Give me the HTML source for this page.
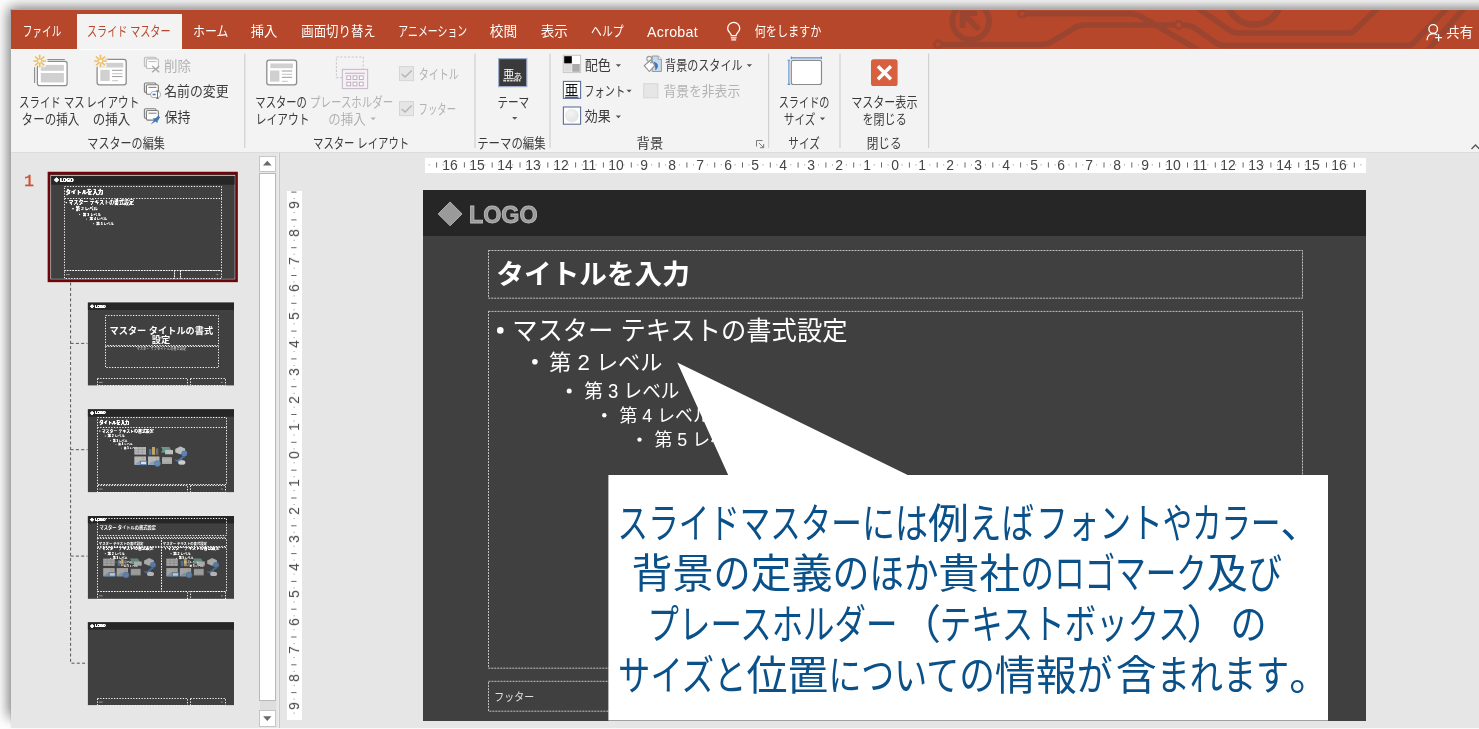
<!DOCTYPE html>
<html lang="ja"><head><meta charset="utf-8"><title>PowerPoint スライド マスター</title>
<style>
html,body{margin:0;padding:0;background:#fff}
body{width:1479px;height:729px;overflow:hidden;position:relative;font-family:"Liberation Sans",sans-serif}
#shadow{position:absolute;left:11px;top:10px;width:1480px;height:704px;box-shadow:0 0 13px 3.5px rgba(0,0,0,.56)}
#win{position:absolute;left:11px;top:9px;width:1470px;height:717.6px;background:#e6e6e6;border-top:1px solid #a9b1b3;overflow:hidden}
#lb{position:absolute;left:10px;top:9px;width:1px;height:716px;background:linear-gradient(#a9b1b3 0,#a6a9aa 8%,#a6a9aa 96%,rgba(166,169,170,0) 100%)}
#win>div,#win>span{position:absolute}
#tabs{left:0;top:0;width:1468px;height:38.5px;background:#B7472A}
#tabon{left:66px;top:4px;width:105px;height:35px;background:#f3f3f3}
#ribbon{left:0;top:38.5px;width:1468px;height:104px;background:#f3f3f3;border-top:1px solid #fbfdfd;border-bottom:1px solid #dcdcdc;box-sizing:border-box}
.lat{white-space:nowrap;line-height:1;will-change:transform}
.rn,.rv{font-size:13.9px;color:#454545}
.rn{transform:translateX(-50%)}
.rv{transform:translate(-50%,-50%) rotate(-90deg)}
#ov{position:absolute;left:0;top:0}
#tl{position:absolute;left:0;top:0;width:1479px;height:729px;overflow:hidden;color:transparent}
#tl span{position:absolute;white-space:nowrap;overflow:hidden;line-height:1.2;height:1.2em}
.t{font-family:"Liberation Sans","Noto Sans CJK JP",sans-serif}
</style></head>
<body>
<div id="shadow"></div><div id="lb"></div>
<div id="win">
<div id="tabs"></div><div id="tabon"></div>
<span class="lat" style="left:636.2px;top:15.2px;font-size:14.2px;letter-spacing:.3px;color:#fff">Acrobat</span>
<div id="ribbon"></div>
<div id="sbup" style="left:248.2px;top:145.6px;width:15.3px;height:14.8px;background:#fff;border:1px solid #c6c6c6;box-sizing:content-box"></div>
<div id="sbthumb" style="left:248.2px;top:162.8px;width:15.3px;height:526.6px;background:#fff;border:1px solid #b9b9b9"></div>
<div id="sbtrack" style="left:248.7px;top:691.4px;width:16.3px;height:9px;background:#dedede"></div>
<div id="sbdn" style="left:248.2px;top:700.2px;width:15.3px;height:15.2px;background:#fff;border:1px solid #c6c6c6"></div>
<div id="split" style="left:267.2px;top:142.6px;width:1px;height:575px;background:#c8c8c8;border-left:1px solid #eee"></div>
<div id="hruler" style="left:413.9px;top:147.9px;width:940.8px;height:15.2px;background:#fff"></div>
<div id="vruler" style="left:275.6px;top:180.6px;width:15.5px;height:529.4px;background:#fff"></div>
<span class="lat rn" style="left:438.5px;top:148.6px">16</span>
<span class="lat rn" style="left:466.3px;top:148.6px">15</span>
<span class="lat rn" style="left:494.1px;top:148.6px">14</span>
<span class="lat rn" style="left:521.9px;top:148.6px">13</span>
<span class="lat rn" style="left:549.7px;top:148.6px">12</span>
<span class="lat rn" style="left:577.5px;top:148.6px">11</span>
<span class="lat rn" style="left:605.4px;top:148.6px">10</span>
<span class="lat rn" style="left:633.2px;top:148.6px">9</span>
<span class="lat rn" style="left:661.0px;top:148.6px">8</span>
<span class="lat rn" style="left:688.8px;top:148.6px">7</span>
<span class="lat rn" style="left:716.6px;top:148.6px">6</span>
<span class="lat rn" style="left:744.4px;top:148.6px">5</span>
<span class="lat rn" style="left:772.2px;top:148.6px">4</span>
<span class="lat rn" style="left:800.0px;top:148.6px">3</span>
<span class="lat rn" style="left:827.8px;top:148.6px">2</span>
<span class="lat rn" style="left:855.6px;top:148.6px">1</span>
<span class="lat rn" style="left:883.5px;top:148.6px">0</span>
<span class="lat rn" style="left:911.3px;top:148.6px">1</span>
<span class="lat rn" style="left:939.1px;top:148.6px">2</span>
<span class="lat rn" style="left:966.9px;top:148.6px">3</span>
<span class="lat rn" style="left:994.7px;top:148.6px">4</span>
<span class="lat rn" style="left:1022.5px;top:148.6px">5</span>
<span class="lat rn" style="left:1050.3px;top:148.6px">6</span>
<span class="lat rn" style="left:1078.1px;top:148.6px">7</span>
<span class="lat rn" style="left:1105.9px;top:148.6px">8</span>
<span class="lat rn" style="left:1133.7px;top:148.6px">9</span>
<span class="lat rn" style="left:1161.5px;top:148.6px">10</span>
<span class="lat rn" style="left:1189.4px;top:148.6px">11</span>
<span class="lat rn" style="left:1217.2px;top:148.6px">12</span>
<span class="lat rn" style="left:1245.0px;top:148.6px">13</span>
<span class="lat rn" style="left:1272.8px;top:148.6px">14</span>
<span class="lat rn" style="left:1300.6px;top:148.6px">15</span>
<span class="lat rn" style="left:1328.4px;top:148.6px">16</span>
<span class="lat rv" style="left:283.5px;top:195.0px">9</span>
<span class="lat rv" style="left:283.5px;top:222.8px">8</span>
<span class="lat rv" style="left:283.5px;top:250.6px">7</span>
<span class="lat rv" style="left:283.5px;top:278.4px">6</span>
<span class="lat rv" style="left:283.5px;top:306.2px">5</span>
<span class="lat rv" style="left:283.5px;top:334.0px">4</span>
<span class="lat rv" style="left:283.5px;top:361.8px">3</span>
<span class="lat rv" style="left:283.5px;top:389.6px">2</span>
<span class="lat rv" style="left:283.5px;top:417.4px">1</span>
<span class="lat rv" style="left:283.5px;top:445.2px">0</span>
<span class="lat rv" style="left:283.5px;top:473.1px">1</span>
<span class="lat rv" style="left:283.5px;top:500.9px">2</span>
<span class="lat rv" style="left:283.5px;top:528.7px">3</span>
<span class="lat rv" style="left:283.5px;top:556.5px">4</span>
<span class="lat rv" style="left:283.5px;top:584.3px">5</span>
<span class="lat rv" style="left:283.5px;top:612.1px">6</span>
<span class="lat rv" style="left:283.5px;top:639.9px">7</span>
<span class="lat rv" style="left:283.5px;top:667.7px">8</span>
<span class="lat rv" style="left:283.5px;top:695.5px">9</span>
<div id="slide" style="left:412.3px;top:179.8px;width:942.4px;height:530.9px;background:#404040"><div id="band" style="height:46.6px;background:#262626"></div></div>
<span class="lat" style="left:12.6px;top:163.8px;font-family:'Liberation Mono',monospace;font-size:16.6px;-webkit-text-stroke:.35px #cf4f30;color:#cf4f30">1</span>
</div>
<div id="tl"><span style="left:23.3px;top:23.4px;font-size:13.33px;width:41.5px">ファイル</span><span style="left:87.6px;top:23.4px;font-size:13.33px;width:85.8px">スライド マスター</span><span style="left:193.7px;top:23.4px;font-size:13.33px;width:37.1px">ホーム</span><span style="left:251.0px;top:23.4px;font-size:13.33px;width:30.0px">挿入</span><span style="left:301.7px;top:23.4px;font-size:13.33px;width:76.6px">画面切り替え</span><span style="left:398.7px;top:23.4px;font-size:13.33px;width:70.9px">アニメーション</span><span style="left:490.0px;top:23.4px;font-size:13.33px;width:30.3px">校閲</span><span style="left:541.0px;top:23.4px;font-size:13.33px;width:30.4px">表示</span><span style="left:591.4px;top:23.4px;font-size:13.33px;width:35.9px">ヘルプ</span><span style="left:755.0px;top:23.4px;font-size:13.33px;width:69.6px">何をしますか</span><span style="left:1446.7px;top:24.4px;font-size:13.33px;width:29.8px">共有</span><span style="left:19.7px;top:94.3px;font-size:13.33px;width:67.3px">スライド マス</span><span style="left:22.0px;top:110.8px;font-size:13.33px;width:61.0px">ターの挿入</span><span style="left:87.5px;top:94.3px;font-size:13.33px;width:52.5px">レイアウト</span><span style="left:93.5px;top:110.8px;font-size:13.33px;width:40.5px">の挿入</span><span style="left:164.7px;top:57.5px;font-size:13.33px;width:30.0px">削除</span><span style="left:164.7px;top:83.1px;font-size:13.33px;width:67.5px">名前の変更</span><span style="left:164.7px;top:108.8px;font-size:13.33px;width:29.5px">保持</span><span style="left:88.0px;top:135.2px;font-size:13.33px;width:80.6px">マスターの編集</span><span style="left:256.0px;top:94.3px;font-size:13.33px;width:54.0px">マスターの</span><span style="left:257.0px;top:110.8px;font-size:13.33px;width:53.0px">レイアウト</span><span style="left:311.0px;top:94.3px;font-size:13.33px;width:85.0px">プレースホルダー</span><span style="left:329.0px;top:110.8px;font-size:13.33px;width:40.5px">の挿入</span><span style="left:419.1px;top:65.7px;font-size:13.33px;width:43.2px">タイトル</span><span style="left:419.1px;top:100.8px;font-size:13.33px;width:39.8px">フッター</span><span style="left:313.7px;top:135.2px;font-size:13.33px;width:96.3px">マスター レイアウト</span><span style="left:497.9px;top:94.3px;font-size:13.33px;width:33.8px">テーマ</span><span style="left:477.7px;top:135.2px;font-size:13.33px;width:71.8px">テーマの編集</span><span style="left:585.0px;top:57.2px;font-size:13.33px;width:29.5px">配色</span><span style="left:585.0px;top:82.9px;font-size:13.33px;width:41.0px">フォント</span><span style="left:585.0px;top:108.4px;font-size:13.33px;width:29.5px">効果</span><span style="left:665.5px;top:57.2px;font-size:13.33px;width:80.5px">背景のスタイル</span><span style="left:663.8px;top:82.9px;font-size:13.33px;width:80.0px">背景を非表示</span><span style="left:637.0px;top:135.2px;font-size:13.33px;width:30.0px">背景</span><span style="left:779.3px;top:94.3px;font-size:13.33px;width:53.4px">スライドの</span><span style="left:784.3px;top:110.8px;font-size:13.33px;width:34.7px">サイズ</span><span style="left:788.8px;top:135.2px;font-size:13.33px;width:34.7px">サイズ</span><span style="left:851.8px;top:94.3px;font-size:13.33px;width:69.2px">マスター表示</span><span style="left:863.3px;top:110.8px;font-size:13.33px;width:45.9px">を閉じる</span><span style="left:867.6px;top:135.2px;font-size:13.33px;width:36.4px">閉じる</span><span style="left:498.3px;top:257.5px;font-size:27.50px;width:193.3px">タイトルを入力</span><span style="left:513.8px;top:314.1px;font-size:26.50px;width:337.2px">マスター テキストの書式設定</span><span style="left:549.7px;top:348.5px;font-size:21.60px">第 2 レベル</span><span style="left:584.9px;top:379.0px;font-size:19.60px">第 3 レベル</span><span style="left:620.0px;top:404.6px;font-size:17.70px">第 4 レベル</span><span style="left:655.0px;top:428.4px;font-size:17.70px">第 5 レベル</span><span style="left:495.0px;top:689.7px;font-size:11.50px;width:42.0px">フッター</span><span style="left:619.5px;top:497.9px;font-size:41.00px;width:244.5px">スライドマスター</span><span style="left:865.3px;top:497.9px;font-size:41.00px;width:172.2px">には例えば</span><span style="left:1038.2px;top:497.9px;font-size:41.00px;width:122.2px">フォント</span><span style="left:1164.2px;top:497.9px;font-size:41.00px;width:133.3px">やカラー、</span><span style="left:632.6px;top:547.4px;font-size:41.00px;width:238.5px">背景の定義の</span><span style="left:872.9px;top:547.4px;font-size:41.00px;width:183.7px">ほか貴社の</span><span style="left:1057.6px;top:547.4px;font-size:41.00px;width:150.4px">ロゴマーク</span><span style="left:1207.7px;top:547.4px;font-size:41.00px;width:77.8px">及び</span><span style="left:650.3px;top:599.0px;font-size:41.00px;width:247.7px">プレースホルダー</span><span style="left:925.0px;top:599.0px;font-size:41.00px;width:15.5px">（</span><span style="left:941.3px;top:599.0px;font-size:41.00px;width:250.4px">テキストボックス</span><span style="left:1190.2px;top:599.0px;font-size:41.00px;width:16.5px">）</span><span style="left:1232.7px;top:599.0px;font-size:41.00px;width:35.3px">の</span><span style="left:619.5px;top:649.6px;font-size:41.00px;width:125.8px">サイズと</span><span style="left:747.2px;top:649.6px;font-size:41.00px;width:212.3px">位置について</span><span style="left:961.4px;top:649.6px;font-size:41.00px;width:154.3px">の情報が</span><span style="left:1116.4px;top:649.6px;font-size:41.00px;width:175.8px">含まれます</span><span style="left:1292.0px;top:649.6px;font-size:41.00px;width:16.6px">。</span><span style="left:110.0px;top:324.9px;font-size:9.10px;width:107.0px">マスター タイトルの書式</span><span style="left:152.0px;top:333.9px;font-size:9.10px;width:22.0px">設定</span><span style="left:136.8px;top:346.6px;font-size:3.30px;width:53.4px">マスター サブタイトルの書式設定</span><span style="left:99.8px;top:525.2px;font-size:4.30px;width:60.2px">マスター タイトルの書式設定</span><span style="left:99.0px;top:541.6px;font-size:3.40px;width:48.4px">マスター テキストの書式設定</span><span style="left:163.0px;top:541.6px;font-size:3.40px;width:47.8px">マスター テキストの書式設定</span></div>
<svg id="ov" width="1479" height="729" viewBox="0 0 1479 729">
<text class="t" x="22.69" y="36.47" font-size="13.33" fill="#fff" textLength="38.6" lengthAdjust="spacingAndGlyphs">ファイル</text>
<text class="t" x="86.99" y="36.47" font-size="13.33" fill="#B7472A" textLength="83.5" lengthAdjust="spacingAndGlyphs">スライド マスター</text>
<text class="t" x="193.10" y="36.47" font-size="13.33" fill="#fff" textLength="35.3" lengthAdjust="spacingAndGlyphs">ホーム</text>
<text class="t" x="250.76" y="36.47" font-size="13.33" fill="#fff" textLength="26.6" lengthAdjust="spacingAndGlyphs">挿入</text>
<text class="t" x="301.32" y="36.47" font-size="13.33" fill="#fff" textLength="74.4" lengthAdjust="spacingAndGlyphs">画面切り替え</text>
<text class="t" x="398.36" y="36.47" font-size="13.33" fill="#fff" textLength="68.9" lengthAdjust="spacingAndGlyphs">アニメーション</text>
<text class="t" x="489.78" y="36.47" font-size="13.33" fill="#fff" textLength="27.4" lengthAdjust="spacingAndGlyphs">校閲</text>
<text class="t" x="540.70" y="36.47" font-size="13.33" fill="#fff" textLength="27.2" lengthAdjust="spacingAndGlyphs">表示</text>
<text class="t" x="591.07" y="36.47" font-size="13.33" fill="#fff" textLength="32.5" lengthAdjust="spacingAndGlyphs">ヘルプ</text>
<text class="t" x="754.73" y="36.47" font-size="13.33" fill="#fff" textLength="66.6" lengthAdjust="spacingAndGlyphs">何をしますか</text>
<text class="t" x="1446.37" y="37.47" font-size="13.33" fill="#fff" textLength="26.6" lengthAdjust="spacingAndGlyphs">共有</text>
<text class="t" x="19.07" y="107.37" font-size="13.33" fill="#3a3a3a" textLength="65.5" lengthAdjust="spacingAndGlyphs">スライド マス</text>
<text class="t" x="21.61" y="123.87" font-size="13.33" fill="#3a3a3a" textLength="57.7" lengthAdjust="spacingAndGlyphs">ターの挿入</text>
<text class="t" x="86.26" y="107.37" font-size="13.33" fill="#3a3a3a" textLength="53.0" lengthAdjust="spacingAndGlyphs">レイアウト</text>
<text class="t" x="92.82" y="123.87" font-size="13.33" fill="#3a3a3a" textLength="37.5" lengthAdjust="spacingAndGlyphs">の挿入</text>
<text class="t" x="164.00" y="70.57" font-size="13.33" fill="#b2b2b2" textLength="27.0" lengthAdjust="spacingAndGlyphs">削除</text>
<text class="t" x="164.19" y="96.17" font-size="13.33" fill="#3a3a3a" textLength="64.4" lengthAdjust="spacingAndGlyphs">名前の変更</text>
<text class="t" x="164.50" y="121.87" font-size="13.33" fill="#3a3a3a" textLength="26.0" lengthAdjust="spacingAndGlyphs">保持</text>
<text class="t" x="87.33" y="148.27" font-size="13.33" fill="#3a3a3a" textLength="77.5" lengthAdjust="spacingAndGlyphs">マスターの編集</text>
<text class="t" x="255.33" y="107.37" font-size="13.33" fill="#3a3a3a" textLength="51.5" lengthAdjust="spacingAndGlyphs">マスターの</text>
<text class="t" x="255.75" y="123.87" font-size="13.33" fill="#3a3a3a" textLength="53.6" lengthAdjust="spacingAndGlyphs">レイアウト</text>
<text class="t" x="310.08" y="107.37" font-size="13.33" fill="#b2b2b2" textLength="83.1" lengthAdjust="spacingAndGlyphs">プレースホルダー</text>
<text class="t" x="328.32" y="123.87" font-size="13.33" fill="#b2b2b2" textLength="37.5" lengthAdjust="spacingAndGlyphs">の挿入</text>
<path d="M370.6 117.4h5.2l-2.6 2.8z" fill="#b2b2b2"/>
<text class="t" x="418.71" y="78.77" font-size="13.33" fill="#b2b2b2" textLength="40.2" lengthAdjust="spacingAndGlyphs">タイトル</text>
<text class="t" x="418.51" y="113.87" font-size="13.33" fill="#b2b2b2" textLength="37.5" lengthAdjust="spacingAndGlyphs">フッター</text>
<text class="t" x="313.02" y="148.27" font-size="13.33" fill="#3a3a3a" textLength="96.2" lengthAdjust="spacingAndGlyphs">マスター レイアウト</text>
<text class="t" x="497.40" y="107.37" font-size="13.33" fill="#3a3a3a" textLength="31.8" lengthAdjust="spacingAndGlyphs">テーマ</text>
<path d="M512.1 117.0h5.2l-2.6 2.8z" fill="#555"/>
<text class="t" x="477.20" y="148.27" font-size="13.33" fill="#3a3a3a" textLength="68.5" lengthAdjust="spacingAndGlyphs">テーマの編集</text>
<text class="t" x="584.64" y="70.27" font-size="13.33" fill="#3a3a3a" textLength="26.2" lengthAdjust="spacingAndGlyphs">配色</text>
<path d="M615.8 64.2h5.2l-2.6 2.8z" fill="#555"/>
<text class="t" x="584.37" y="95.97" font-size="13.33" fill="#3a3a3a" textLength="40.8" lengthAdjust="spacingAndGlyphs">フォント</text>
<path d="M626.5 89.8h5.2l-2.6 2.8z" fill="#555"/>
<text class="t" x="584.71" y="121.47" font-size="13.33" fill="#3a3a3a" textLength="26.0" lengthAdjust="spacingAndGlyphs">効果</text>
<path d="M615.8 115.4h5.2l-2.6 2.8z" fill="#555"/>
<text class="t" x="665.12" y="70.27" font-size="13.33" fill="#3a3a3a" textLength="77.4" lengthAdjust="spacingAndGlyphs">背景のスタイル</text>
<path d="M746.8 64.2h5.2l-2.6 2.8z" fill="#555"/>
<text class="t" x="663.42" y="95.97" font-size="13.33" fill="#b2b2b2" textLength="76.8" lengthAdjust="spacingAndGlyphs">背景を非表示</text>
<text class="t" x="636.62" y="148.27" font-size="13.33" fill="#3a3a3a" textLength="26.6" lengthAdjust="spacingAndGlyphs">背景</text>
<text class="t" x="778.68" y="107.37" font-size="13.33" fill="#3a3a3a" textLength="50.8" lengthAdjust="spacingAndGlyphs">スライドの</text>
<text class="t" x="783.84" y="123.87" font-size="13.33" fill="#3a3a3a" textLength="31.6" lengthAdjust="spacingAndGlyphs">サイズ</text>
<path d="M819.9 117.4h5.2l-2.6 2.8z" fill="#555"/>
<text class="t" x="788.34" y="148.27" font-size="13.33" fill="#3a3a3a" textLength="31.6" lengthAdjust="spacingAndGlyphs">サイズ</text>
<text class="t" x="851.14" y="107.37" font-size="13.33" fill="#3a3a3a" textLength="66.3" lengthAdjust="spacingAndGlyphs">マスター表示</text>
<text class="t" x="862.46" y="123.87" font-size="13.33" fill="#3a3a3a" textLength="44.3" lengthAdjust="spacingAndGlyphs">を閉じる</text>
<text class="t" x="866.68" y="148.27" font-size="13.33" fill="#3a3a3a" textLength="34.9" lengthAdjust="spacingAndGlyphs">閉じる</text>
<path d="M244.8 53.5V148" stroke="#d0d0d0" stroke-width="1.2"/>
<path d="M475.0 53.5V148" stroke="#d0d0d0" stroke-width="1.2"/>
<path d="M550.0 53.5V148" stroke="#d0d0d0" stroke-width="1.2"/>
<path d="M768.6 53.5V148" stroke="#d0d0d0" stroke-width="1.2"/>
<path d="M840.0 53.5V148" stroke="#d0d0d0" stroke-width="1.2"/>
<path d="M928.6 53.5V148" stroke="#d0d0d0" stroke-width="1.2"/>
<clipPath id="cpt"><rect x="11" y="10" width="1468" height="38.5"/></clipPath>
<g clip-path="url(#cpt)" fill="none" stroke="#9b4530" stroke-width="5.700" stroke-linejoin="round"><circle cx="970.7" cy="21.2" r="18.4" stroke-width="5.8"/><path d="M962.6 28V13.2H977M963.5 14l15.5 15.5" stroke-width="5.6" stroke-linejoin="miter"/><circle cx="1022" cy="13.7" r="3.6" stroke-width="2.6"/><path d="M1026 13.7H1128q8 0 15 4L1200 51"/><circle cx="938" cy="44.5" r="3.6" stroke-width="2.6"/><path d="M942 44.5H1042q6 0 10-3L1076 27q4-2 9-2H1174"/><circle cx="1178.6" cy="25" r="3.8" stroke-width="2.6"/><path d="M1183 25q8 0 13 4L1216 43q4 2.5 9 2.5H1408q4 0 6-3L1449 6"/><path d="M1192 4L1229 30q4 3 9 3H1349q4 0 6-3L1380 6"/><circle cx="1254" cy="-3" r="27.500" stroke-width="6.400"/><path d="M1466 6L1426 52"/></g>
<g fill="none" stroke="#fff" stroke-width="1.3" stroke-linecap="round"><path d="M731.3 35.6c0-2.6-3.6-3.600-3.600-7.200a6 6 0 0 1 12 0c0 3.600-3.600 4.600-3.600 7.200z"/><path d="M731.3 37.8h4.8M731.8 39.9h3.8"/></g>
<g fill="none" stroke="#fff" stroke-width="1.3"><circle cx="1433.2" cy="29" r="4.3"/><path d="M1427 40.3c0-4 2.6-6.800 6.200-6.800 1.600 0 3 .5 4 1.400"/><path d="M1438.6 34.2v7M1435.1 37.7h7"/></g>
<path d="M47.3 59.5H64.8M34.6 67V83" stroke="#8c8c8c" stroke-width="1.1" fill="none"/><rect x="37.4" y="61.3" width="29.7" height="24.3" rx="2.2" fill="#fff" stroke="#8c8c8c" stroke-width="1.2"/><rect x="40.8" y="64.9" width="23.1" height="5.9" fill="#d0d0d0"/><rect x="40.8" y="73" width="23.1" height="9.4" fill="#d0d0d0"/><path d="M33.4 61.0L46.0 61.0M35.2 56.5L44.2 65.5M39.7 54.7L39.7 67.3M44.2 56.5L35.2 65.5" stroke="#f5f3ee" stroke-width="3.6" stroke-linecap="round" fill="none"/><path d="M33.4 61.0L46.0 61.0M35.2 56.5L44.2 65.5M39.7 54.7L39.7 67.3M44.2 56.5L35.2 65.5" stroke="#e9bf6c" stroke-width="1.7" fill="none"/><circle cx="39.7" cy="61.0" r="1.6" fill="#fdf8ec"/>
<rect x="97.1" y="59.4" width="29.1" height="25.4" rx="2.4" fill="#fff" stroke="#8c8c8c" stroke-width="1.3"/><rect x="100.7" y="62.8" width="22.6" height="4.7" fill="#d0d0d0"/><rect x="100.3" y="69.8" width="9.4" height="11.2" fill="#d0d0d0"/><path d="M112.1 70.3h10.4M112.1 76.6h10.4" stroke="#9a9a9a" stroke-width="1"/><path d="M112.1 73.6h10.4M112.1 80.6h6" stroke="#cfcfcf" stroke-width="1.3"/><path d="M94.2 61.0L106.8 61.0M96.0 56.5L105.0 65.5M100.5 54.7L100.5 67.3M105.0 56.5L96.0 65.5" stroke="#f5f3ee" stroke-width="3.6" stroke-linecap="round" fill="none"/><path d="M94.2 61.0L106.8 61.0M96.0 56.5L105.0 65.5M100.5 54.7L100.5 67.3M105.0 56.5L96.0 65.5" stroke="#e9bf6c" stroke-width="1.7" fill="none"/><circle cx="100.5" cy="61.0" r="1.6" fill="#fdf8ec"/>
<rect x="266.8" y="60.1" width="29.8" height="24.8" rx="2.4" fill="#fff" stroke="#8c8c8c" stroke-width="1.3"/><rect x="270.4" y="63.5" width="22.6" height="4.7" fill="#d0d0d0"/><rect x="270.0" y="70.5" width="9.4" height="11.2" fill="#d0d0d0"/><path d="M281.8 71.0h10.4M281.8 77.3h10.4" stroke="#9a9a9a" stroke-width="1"/><path d="M281.8 74.3h10.4M281.8 81.3h6" stroke="#cfcfcf" stroke-width="1.3"/>
<rect x="144.4" y="57.2" width="11.6" height="9.4" rx="1.3" fill="#f3f3f3" stroke="#bdbdbd" stroke-width="1.1"/><rect x="146.4" y="58.9" width="12" height="9.6" rx="1.3" fill="#fcfcfc" stroke="#bdbdbd" stroke-width="1.1"/><path d="M148.5 61.6h8" stroke="#bdbdbd" stroke-width="1"/><path d="M152.2 66l7 6.2M159.2 66l-7 6.2" stroke="#a9a9a9" stroke-width="1.5"/>
<rect x="144.4" y="83.0" width="11.6" height="9.4" rx="1.3" fill="#f3f3f3" stroke="#7d7d7d" stroke-width="1.1"/><rect x="146.4" y="84.7" width="12" height="9.6" rx="1.3" fill="#fcfcfc" stroke="#7d7d7d" stroke-width="1.1"/><path d="M148.5 87.4h8" stroke="#7d7d7d" stroke-width="1"/><rect x="150.700" y="91.500" width="9.800" height="6" rx="2.600" fill="#fff" stroke="#9c9c9c" stroke-width=".8"/><path d="M152.600 94.500h3" stroke="#3f78b5" stroke-width="1.600"/><path d="M157.500 90.800v7.600M156.200 90.800h2.600M156.200 98.400h2.600" stroke="#666" stroke-width=".9" fill="none"/>
<rect x="144.4" y="108.8" width="11.6" height="9.4" rx="1.3" fill="#f3f3f3" stroke="#7d7d7d" stroke-width="1.1"/><rect x="146.4" y="110.5" width="12" height="9.6" rx="1.3" fill="#fcfcfc" stroke="#7d7d7d" stroke-width="1.1"/><path d="M148.5 113.2h8" stroke="#7d7d7d" stroke-width="1"/><path d="M150.6 124.4l3.6-4.200-1.600-1.600 3.400-.6 2.200-2.600 2 2-2.400 2.400-.4 3.400-1.800-1.600z" fill="#3f78b5"/>
<rect x="336.4" y="57" width="26.8" height="20.6" fill="none" stroke="#c9c9c9" stroke-width="1.1" stroke-dasharray="2.2 1.6"/><rect x="342.4" y="69.4" width="25.2" height="19.2" fill="#f6eff6" stroke="#c9bcc9" stroke-width="1.1"/><path d="M345 73.3h20" stroke="#c9bcc9" stroke-width="1.2"/><rect x="346.8" y="75.9" width="3.8" height="3.6" fill="#fff" stroke="#bdb0bd" stroke-width="1"/><rect x="346.8" y="82.2" width="3.8" height="3.6" fill="#fff" stroke="#bdb0bd" stroke-width="1"/><rect x="353.1" y="75.9" width="3.8" height="3.6" fill="#fff" stroke="#bdb0bd" stroke-width="1"/><rect x="353.1" y="82.2" width="3.8" height="3.6" fill="#fff" stroke="#bdb0bd" stroke-width="1"/><rect x="359.4" y="75.9" width="3.8" height="3.6" fill="#fff" stroke="#bdb0bd" stroke-width="1"/><rect x="359.4" y="82.2" width="3.8" height="3.6" fill="#fff" stroke="#bdb0bd" stroke-width="1"/>
<rect x="399.5" y="66.6" width="14" height="14" fill="#e6e6e6" stroke="#d5d5d5" stroke-width="1"/><path d="M401.7 74.0l3.4 3 6.6-6.600" fill="none" stroke="#b4b4b4" stroke-width="1.4"/><rect x="399.5" y="101.6" width="14" height="14" fill="#e6e6e6" stroke="#d5d5d5" stroke-width="1"/><path d="M401.7 109.0l3.4 3 6.6-6.600" fill="none" stroke="#b4b4b4" stroke-width="1.4"/><rect x="643.8" y="83.8" width="14" height="14" fill="#e6e6e6" stroke="#d5d5d5" stroke-width="1"/>
<rect x="498.6" y="58.6" width="28.2" height="28" fill="#3a3a3a" stroke="#9eabc6" stroke-width="1.2"/><path d="M503.2 80.6h3M507 80.6h2.4M510.2 80.6h2.4M513.4 80.6h2M516.2 80.6h1.8M518.8 80.6h1.6" stroke="#d8d8d8" stroke-width="1.6"/>
<text class="t" x="503.13" y="77.77" font-size="11.5" fill="#fff" textLength="11" lengthAdjust="spacingAndGlyphs">亜</text>
<text class="t" x="513.60" y="78.84" font-size="8" fill="#fff" textLength="8.8" lengthAdjust="spacingAndGlyphs">あ</text>
<rect x="563.3" y="55.3" width="17.3" height="17.3" fill="#fff" stroke="#c6c6c6" stroke-width="1"/><rect x="564.2" y="56.2" width="7.6" height="7.2" fill="#000"/><rect x="564.2" y="64" width="7.6" height="7.8" fill="#dcdcdc"/><rect x="572.2" y="64" width="7.6" height="7.8" fill="#ababab"/>
<rect x="563.4" y="81.4" width="17.2" height="17" fill="#fff" stroke="#5c6f96" stroke-width="1.1"/><path d="M565 97.2h13.4" stroke="#222" stroke-width="1"/>
<text class="t" x="564.86" y="94.97" font-size="13.6" fill="#111">亜</text>
<defs><radialGradient id="eg" cx=".4" cy=".35" r=".7"><stop offset="0" stop-color="#f4f4f4"/><stop offset="1" stop-color="#e2e2e2"/></radialGradient></defs><rect x="563.4" y="107" width="17.2" height="17.2" fill="#fff" stroke="#5c6f96" stroke-width="1.1"/><circle cx="571.9" cy="115.6" r="6.4" fill="url(#eg)" stroke="#e0e0e0" stroke-width=".6"/>
<path d="M652.2 56h6.2l3 3.2v12.3h-9.200z" fill="#c7daee" stroke="#9a9a9a" stroke-width="1"/><path d="M658.2 56v3.4h3.2" fill="#fff" stroke="#9a9a9a" stroke-width=".9"/><path d="M653.4 61.4c3 .8 4.6 2.4 4.6 4.6 0 1.8-1.400 3.200-2.600 4.400-.2-2.600-.2-5.800-2-9z" fill="#3d7ab8"/><circle cx="649.3" cy="58.9" r="2.5" fill="none" stroke="#9a9a9a" stroke-width="1.1"/><path d="M644.2 65.700l6.600-5.700 4 5.300-5.400 6.200z" fill="#fff" stroke="#8c8c8c" stroke-width="1.1" stroke-linejoin="round"/><circle cx="651" cy="62.600" r=".9" fill="#8c8c8c"/>
<rect x="791.3" y="60.3" width="30.2" height="24.2" rx="2" fill="#fff" stroke="#8c8c8c" stroke-width="1.2"/><path d="M791 57.9h30.600M791.3 56.600v2.600M821.4 56.600v2.600M788.9 60h0v24.600M787.600 60.300h2.600M787.600 84.400h2.600" stroke="#5b8fd0" stroke-width="1.1" fill="none"/>
<rect x="871" y="59.300" width="26.600" height="26.700" rx="2.600" fill="#d8603f"/><path d="M877.900 66.200l13 13M890.900 66.200l-13 13" stroke="#fff" stroke-width="3.400"/>
<path d="M756.500 146.500v-6h6M759 143l4.600 4.600M763.700 144v3.700h-3.700" fill="none" stroke="#7a7a7a" stroke-width="1"/>
<path d="M1471.500 149l4-4 4 4" fill="none" stroke="#555" stroke-width="1.300"/>
<path d="M263 165.600l4.300-4.800 4.300 4.800z" fill="#6a6a6a"/><path d="M263.100 716.300h8.400l-4.200 4.600z" fill="#6a6a6a"/>
<path d="M436.6 162.300v5.300M464.4 162.300v5.300M492.2 162.300v5.300M520.0 162.300v5.300M547.8 162.300v5.300M575.6 162.300v5.300M603.4 162.300v5.300M631.3 162.300v5.300M659.1 162.300v5.300M686.9 162.300v5.300M714.7 162.300v5.300M742.5 162.300v5.300M770.3 162.300v5.300M798.1 162.300v5.300M825.9 162.300v5.300M853.7 162.300v5.300M881.5 162.300v5.300M909.4 162.300v5.300M937.2 162.300v5.300M965.0 162.300v5.300M992.8 162.300v5.300M1020.6 162.300v5.300M1048.4 162.300v5.300M1076.2 162.300v5.300M1104.0 162.300v5.300M1131.8 162.300v5.300M1159.6 162.300v5.300M1187.5 162.300v5.300M1215.3 162.300v5.300M1243.1 162.300v5.300M1270.9 162.300v5.300M1298.7 162.300v5.300M1326.5 162.300v5.300M1354.3 162.300v5.300M291.200 192.1h5.300M291.200 219.9h5.300M291.200 247.7h5.300M291.200 275.5h5.300M291.200 303.3h5.300M291.200 331.1h5.300M291.200 358.9h5.300M291.200 386.7h5.300M291.200 414.5h5.300M291.200 442.3h5.300M291.200 470.2h5.300M291.200 498.0h5.300M291.200 525.8h5.300M291.200 553.6h5.300M291.200 581.4h5.300M291.200 609.2h5.300M291.200 637.0h5.300M291.200 664.8h5.300M291.200 692.6h5.300" stroke="#6a6a6a" stroke-width="1" fill="none"/><path d="M429.2 164.400v1M443.1 164.400v1M457.0 164.400v1M470.9 164.400v1M484.9 164.400v1M498.8 164.400v1M512.7 164.400v1M526.6 164.400v1M540.5 164.400v1M554.4 164.400v1M568.3 164.400v1M582.2 164.400v1M596.1 164.400v1M610.0 164.400v1M623.9 164.400v1M637.8 164.400v1M651.7 164.400v1M665.6 164.400v1M679.5 164.400v1M693.4 164.400v1M707.3 164.400v1M721.2 164.400v1M735.1 164.400v1M749.0 164.400v1M763.0 164.400v1M776.9 164.400v1M790.8 164.400v1M804.7 164.400v1M818.6 164.400v1M832.5 164.400v1M846.4 164.400v1M860.3 164.400v1M874.2 164.400v1M888.1 164.400v1M902.0 164.400v1M915.9 164.400v1M929.8 164.400v1M943.7 164.400v1M957.6 164.400v1M971.5 164.400v1M985.4 164.400v1M999.3 164.400v1M1013.2 164.400v1M1027.1 164.400v1M1041.1 164.400v1M1055.0 164.400v1M1068.9 164.400v1M1082.8 164.400v1M1096.7 164.400v1M1110.6 164.400v1M1124.5 164.400v1M1138.4 164.400v1M1152.3 164.400v1M1166.2 164.400v1M1180.1 164.400v1M1194.0 164.400v1M1207.9 164.400v1M1221.8 164.400v1M1235.7 164.400v1M1249.6 164.400v1M1263.5 164.400v1M1277.4 164.400v1M1291.3 164.400v1M1305.2 164.400v1M1319.2 164.400v1M1333.1 164.400v1M1347.0 164.400v1M1360.9 164.400v1M293.600 198.6h1M293.600 212.5h1M293.600 226.4h1M293.600 240.3h1M293.600 254.2h1M293.600 268.1h1M293.600 282.0h1M293.600 295.9h1M293.600 309.8h1M293.600 323.8h1M293.600 337.7h1M293.600 351.6h1M293.600 365.5h1M293.600 379.4h1M293.600 393.3h1M293.600 407.2h1M293.600 421.1h1M293.600 435.0h1M293.600 448.9h1M293.600 462.8h1M293.600 476.7h1M293.600 490.6h1M293.600 504.5h1M293.600 518.4h1M293.600 532.3h1M293.600 546.2h1M293.600 560.1h1M293.600 574.0h1M293.600 587.9h1M293.600 601.9h1M293.600 615.8h1M293.600 629.7h1M293.600 643.6h1M293.600 657.5h1M293.600 671.4h1M293.600 685.3h1M293.600 699.2h1M293.600 713.1h1" stroke="#8a8a8a" stroke-width="1" fill="none"/>
<g id="mlogo">
<path d="M450.100 202l11.900 11.900-11.900 11.900-11.900-11.900z" fill="#9a9a9a" stroke="#b4b4b4" stroke-width="1"/>
<text x="469" y="223" font-family="Liberation Sans,sans-serif" font-weight="bold" font-size="24.700" textLength="68.600" lengthAdjust="spacingAndGlyphs" fill="#9a9a9a" stroke="#b9b9b9" stroke-width=".9">LOGO</text>
</g>
<rect x="488.5" y="250.5" width="814.0" height="47.7" fill="none" stroke="#d8d8d8" stroke-width="1" stroke-dasharray="2 1" opacity="0.85"/><rect x="488.5" y="311.4" width="814.0" height="356.8" fill="none" stroke="#d8d8d8" stroke-width="1" stroke-dasharray="2 1" opacity="0.85"/><rect x="488.5" y="681.3" width="391.5" height="29.9" fill="none" stroke="#d8d8d8" stroke-width="1" stroke-dasharray="2 1" opacity="0.85"/>
<g id="mtitle">
<text class="t" x="496.34" y="284.45" font-size="27.5" font-weight="bold" fill="#fff" textLength="193.6" lengthAdjust="spacingAndGlyphs">タイトルを入力</text>
</g><g id="mbody">
<circle cx="500.3" cy="330.4" r="3.30" fill="#fff"/>
<text class="t" x="512.17" y="340.07" font-size="26.5" fill="#fff" textLength="335.4" lengthAdjust="spacingAndGlyphs">マスター テキストの書式設定</text>
<circle cx="534.9" cy="361.8" r="2.80" fill="#fff"/>
<text class="t" x="549.07" y="369.71" font-size="21.6" fill="#fff" textLength="113.4" lengthAdjust="spacingAndGlyphs">第 2 レベル</text>
<circle cx="569.2" cy="391.0" r="2.50" fill="#fff"/>
<text class="t" x="584.37" y="398.25" font-size="19.6" fill="#fff" textLength="95.0" lengthAdjust="spacingAndGlyphs">第 3 レベル</text>
<circle cx="604.3" cy="415.3" r="2.20" fill="#fff"/>
<text class="t" x="619.49" y="421.93" font-size="17.7" fill="#fff" textLength="91.3" lengthAdjust="spacingAndGlyphs">第 4 レベル</text>
<circle cx="639.5" cy="439.6" r="2.20" fill="#fff"/>
<text class="t" x="654.49" y="445.73" font-size="17.7" fill="#fff" textLength="91.3" lengthAdjust="spacingAndGlyphs">第 5 レベル</text>
</g>
<text class="t" x="494.36" y="700.97" font-size="11.5" fill="#e0e0e0" textLength="39.7" lengthAdjust="spacingAndGlyphs">フッター</text>
<path d="M608.400 474.900H728.200L677.300 362.500 907.700 474.900H1328V720.600H608.400z" fill="#fff"/>
<g class="t" fill="#0a5089" font-size="41">
<text x="617.62" y="538.08" textLength="244.3" lengthAdjust="spacingAndGlyphs">スライドマスター</text>
<text x="861.91" y="538.08" textLength="66.08" lengthAdjust="spacingAndGlyphs">には</text>
<text x="927.99" y="538.08">例</text>
<text x="968.99" y="538.08" textLength="65.05" lengthAdjust="spacingAndGlyphs">えば</text>
<text x="1036.19" y="538.08" textLength="126.6" lengthAdjust="spacingAndGlyphs">フォント</text>
<text x="1162.77" y="538.08" textLength="117.6" lengthAdjust="spacingAndGlyphs">やカラー</text>
<text x="1280.35" y="538.08">、</text>
<text x="631.42" y="587.58">背景</text>
<text x="713.42" y="587.58" textLength="37.1" lengthAdjust="spacingAndGlyphs">の</text>
<text x="750.56" y="587.58">定義</text>
<text x="832.56" y="587.58" textLength="37.0" lengthAdjust="spacingAndGlyphs">の</text>
<text x="869.54" y="587.58" textLength="68.76" lengthAdjust="spacingAndGlyphs">ほか</text>
<text x="938.30" y="587.58">貴社</text>
<text x="1020.30" y="587.58" textLength="33.8" lengthAdjust="spacingAndGlyphs">の</text>
<text x="1054.13" y="587.58" textLength="152.7" lengthAdjust="spacingAndGlyphs">ロゴマーク</text>
<text x="1206.84" y="587.58">及</text>
<text x="1247.84" y="587.58" textLength="34.3" lengthAdjust="spacingAndGlyphs">び</text>
<text x="647.54" y="639.18" textLength="249.8" lengthAdjust="spacingAndGlyphs">プレースホルダー</text>
<text x="941" y="639.18" text-anchor="end">（</text>
<text x="939.76" y="639.18" textLength="250" lengthAdjust="spacingAndGlyphs">テキストボックス</text>
<text x="1186.5" y="639.18">）</text>
<text x="1230.43" y="639.18" textLength="36.1" lengthAdjust="spacingAndGlyphs">の</text>
<text x="618.09" y="689.78" textLength="128.3" lengthAdjust="spacingAndGlyphs">サイズと</text>
<text x="746.38" y="689.78">位置</text>
<text x="828.38" y="689.78" textLength="130.8" lengthAdjust="spacingAndGlyphs">について</text>
<text x="959.15" y="689.78" textLength="35.7" lengthAdjust="spacingAndGlyphs">の</text>
<text x="994.86" y="689.78">情報</text>
<text x="1076.86" y="689.78" textLength="35.7" lengthAdjust="spacingAndGlyphs">が</text>
<text x="1115.66" y="689.78">含</text>
<text x="1156.66" y="689.78" textLength="132.5" lengthAdjust="spacingAndGlyphs">まれます</text>
<text x="1289.17" y="689.78">。</text>
</g>
<path d="M70.600 282.500V663.200H87.500M70.600 343.400H87.500M70.600 449.700H87.500M70.600 556.100H87.500" fill="none" stroke="#555" stroke-width="1" stroke-dasharray="3 2.300"/>
<defs><filter id="wh" x="-5%" y="-20%" width="110%" height="140%"><feColorMatrix type="matrix" values="0 0 0 0 .97  0 0 0 0 .97  0 0 0 0 .97  0 0 0 1.900 0"/></filter></defs>
<rect x="49" y="173.100" width="187.500" height="107.700" fill="#404040" stroke="#6d0509" stroke-width="2.700"/><rect x="50.800" y="175.400" width="184" height="103.500" fill="none" stroke="#c9c9c9" stroke-width=".8"/>
<rect x="51.3" y="176.0" width="183.2" height="102.7" fill="#404040"/><rect x="51.3" y="176.0" width="183.2" height="8.7" fill="#262626"/>
<use href="#mlogo" transform="matrix(0.1945 0 0 0.1945 -31.03 138.28)" filter="url(#wh)"/><use href="#mtitle" transform="matrix(0.1945 0 0 0.1945 -31.03 138.28)" filter="url(#wh)"/><use href="#mbody" transform="matrix(0.1945 0 0 0.1945 -31.03 138.28)" filter="url(#wh)"/>
<rect x="64.5" y="186.5" width="157.0" height="12.0" fill="none" stroke="#fff" stroke-width="1" stroke-dasharray="1.300 1.450" opacity="0.95"/><path d="M64.5 198.5V270.5H221.5V198.5" fill="none" stroke="#fff" stroke-width="1" stroke-dasharray="1.300 1.450" opacity=".95"/><rect x="64.5" y="270.5" width="110.0" height="8.0" fill="none" stroke="#fff" stroke-width="1" stroke-dasharray="1.300 1.450" opacity="0.95"/><rect x="174.5" y="270.5" width="6.0" height="8.0" fill="none" stroke="#fff" stroke-width="1" stroke-dasharray="1.300 1.450" opacity="0.95"/><rect x="180.5" y="270.5" width="41.0" height="8.0" fill="none" stroke="#fff" stroke-width="1" stroke-dasharray="1.300 1.450" opacity="0.95"/><path d="M66.2 274.6h3.600M216.5 274.6h1.800" stroke="#cfcfcf" stroke-width=".8" opacity=".75"/>
<rect x="87.9" y="302.6" width="146.1" height="82.8" fill="#404040"/><rect x="87.9" y="302.6" width="146.1" height="7.4" fill="#262626"/><use href="#mlogo" transform="matrix(0.1550 0 0 0.1550 22.29 273.18)" filter="url(#wh)"/>
<rect x="87.9" y="409.3" width="146.1" height="82.8" fill="#404040"/><rect x="87.9" y="409.3" width="146.1" height="7.4" fill="#262626"/><use href="#mlogo" transform="matrix(0.1550 0 0 0.1550 22.29 379.88)" filter="url(#wh)"/>
<rect x="87.9" y="516.0" width="146.1" height="82.8" fill="#404040"/><rect x="87.9" y="516.0" width="146.1" height="7.4" fill="#262626"/><use href="#mlogo" transform="matrix(0.1550 0 0 0.1550 22.29 486.58)" filter="url(#wh)"/>
<rect x="87.9" y="622.3" width="146.1" height="82.8" fill="#404040"/><rect x="87.9" y="622.3" width="146.1" height="7.4" fill="#262626"/><use href="#mlogo" transform="matrix(0.1550 0 0 0.1550 22.29 592.88)" filter="url(#wh)"/>
<rect x="105.5" y="315.5" width="113.0" height="30.0" fill="none" stroke="#fff" stroke-width="1" stroke-dasharray="1.300 1.450" opacity="0.95"/><rect x="105.5" y="346.5" width="113.0" height="21.0" fill="none" stroke="#fff" stroke-width="1" stroke-dasharray="1.300 1.450" opacity="0.95"/><rect x="97.5" y="378.5" width="90.0" height="7.0" fill="none" stroke="#fff" stroke-width="1" stroke-dasharray="1.300 1.450" opacity="0.95"/><rect x="190.5" y="378.5" width="35.0" height="7.0" fill="none" stroke="#fff" stroke-width="1" stroke-dasharray="1.300 1.450" opacity="0.95"/><path d="M99.0 382.4h3.600M221.0 382.4h1.800" stroke="#cfcfcf" stroke-width=".8" opacity=".75"/>
<text class="t" x="109.54" y="333.86" font-size="9.1" font-weight="bold" fill="#fff" textLength="103.6" lengthAdjust="spacingAndGlyphs">マスター タイトルの書式</text>
<text class="t" x="151.75" y="342.86" font-size="9.1" font-weight="bold" fill="#fff" textLength="18.4" lengthAdjust="spacingAndGlyphs">設定</text>
<text class="t" x="136.59" y="349.85" font-size="3.3" fill="#ddd" textLength="49.7" lengthAdjust="spacingAndGlyphs">マスター サブタイトルの書式設定</text>
<g id="pic" opacity=".8"><rect x="134.500" y="447.100" width="11.500" height="7.300" fill="#bdbdbd"/><path d="M134.500 449.500h11.500M134.500 452h11.500M138.300 447.100v7.300M142.200 447.100v7.300" stroke="#8e8e8e" stroke-width=".5"/><rect x="148.900" y="449.200" width="2.500" height="5.400" fill="#4a78a8"/><rect x="152" y="447" width="3" height="7.600" fill="#c8a868"/><rect x="155.800" y="448.500" width="2.400" height="6.100" fill="#747474"/><path d="M161.200 447.100h8l1.700 2.700-1.700 2.700h-8l1.500-2.700z" fill="#6b9a8b"/><rect x="165.200" y="450" width="7.800" height="4.200" fill="#c4c4c4"/><path d="M175.400 449l5-2.400 4.700 2.200v3.400l-4.900 2-4.800-2z" fill="#c2c2c2"/><circle cx="184.200" cy="453.300" r="2.900" fill="#5a86b8"/><rect x="134.500" y="456.600" width="11.500" height="8.200" fill="#bcbcbc"/><path d="M135 464.800q3.500-4.800 7-3.400v3.400z" fill="#8aa4c4"/><rect x="140.400" y="461.200" width="6.200" height="3.500" fill="#e8e8e8" stroke="#4a78a8" stroke-width=".9"/><circle cx="143" cy="458.400" r=".9" fill="#c8a868"/><rect x="148" y="456.600" width="11.300" height="8.200" fill="#bcbcbc"/><path d="M148.500 464.800q3.500-4.800 7-3.400v3.400z" fill="#8aa4c4"/><circle cx="157.400" cy="463.400" r="2.900" fill="#6a90bc" stroke="#4a78a8" stroke-width=".6"/><circle cx="156.700" cy="458.400" r=".9" fill="#c8a868"/><rect x="162.100" y="457.300" width="9.800" height="6.600" fill="#b4b4b4"/><path d="M162.100 458.200h9.800M162.100 463h9.800" stroke="#8a8a8a" stroke-width=".6" stroke-dasharray=".8 .8"/><path d="M174.700 459q2.600 2 5.300-.4 1.800-3 5.600-2.200-1.200 1.200-3 1.600-1 3.800-4.600 3.800-2.500-.2-3.300-2.800z" fill="#4a78a8"/><ellipse cx="181.800" cy="462.400" rx="3.500" ry="2.200" fill="#d2d2d2"/></g>
<use href="#mtitle" transform="matrix(0.1550 0 0 0.1550 22.29 379.88)" filter="url(#wh)"/><use href="#mbody" transform="matrix(0.1550 0 0 0.1550 22.29 379.88)" filter="url(#wh)"/>
<rect x="97.5" y="417.5" width="129.0" height="10.0" fill="none" stroke="#fff" stroke-width="1" stroke-dasharray="1.300 1.450" opacity="0.95"/><path d="M97.5 427.5V484.5H226.5V427.5" fill="none" stroke="#fff" stroke-width="1" stroke-dasharray="1.300 1.450" opacity=".95"/><rect x="97.5" y="485.5" width="90.0" height="7.0" fill="none" stroke="#fff" stroke-width="1" stroke-dasharray="1.300 1.450" opacity="0.95"/><rect x="190.5" y="485.5" width="35.0" height="7.0" fill="none" stroke="#fff" stroke-width="1" stroke-dasharray="1.300 1.450" opacity="0.95"/><path d="M99.0 489.1h3.600M221.0 489.1h1.800" stroke="#cfcfcf" stroke-width=".8" opacity=".75"/>
<text class="t" x="99.59" y="529.43" font-size="4.3" font-weight="bold" fill="#fff" textLength="56.5" lengthAdjust="spacingAndGlyphs">マスター タイトルの書式設定</text>
<text class="t" x="98.84" y="544.89" font-size="3.4" font-weight="bold" fill="#fff" textLength="44.6" lengthAdjust="spacingAndGlyphs">マスター テキストの書式設定</text>
<text class="t" x="162.84" y="544.89" font-size="3.4" font-weight="bold" fill="#fff" textLength="44.05" lengthAdjust="spacingAndGlyphs">マスター テキストの書式設定</text>
<clipPath id="c4a"><rect x="97" y="546.800" width="64.500" height="20"/></clipPath><clipPath id="c4b"><rect x="161.500" y="546.800" width="64.500" height="20"/></clipPath>
<g clip-path="url(#c4a)"><use href="#mbody" transform="matrix(0.1550 0 0 0.1550 22.29 497.65)" filter="url(#wh)"/></g><g clip-path="url(#c4b)"><use href="#mbody" transform="matrix(0.1550 0 0 0.1550 88.09 497.65)" filter="url(#wh)"/></g>
<use href="#pic" transform="translate(-31.300 111.500)"/><use href="#pic" transform="translate(31.800 111.500)"/>
<rect x="97.5" y="518.5" width="129.0" height="17.0" fill="none" stroke="#fff" stroke-width="1" stroke-dasharray="1.300 1.450" opacity="0.95"/><path d="M97 537.400H226" stroke="#fff" stroke-dasharray="1.300 1.450" opacity=".95"/><rect x="97.5" y="538.5" width="64.0" height="8.0" fill="none" stroke="#fff" stroke-width="1" stroke-dasharray="1.300 1.450" opacity="0.95"/><rect x="161.5" y="538.5" width="65.0" height="8.0" fill="none" stroke="#fff" stroke-width="1" stroke-dasharray="1.300 1.450" opacity="0.95"/><rect x="97.5" y="547.5" width="64.0" height="44.0" fill="none" stroke="#fff" stroke-width="1" stroke-dasharray="1.300 1.450" opacity="0.95"/><rect x="161.5" y="547.5" width="65.0" height="44.0" fill="none" stroke="#fff" stroke-width="1" stroke-dasharray="1.300 1.450" opacity="0.95"/><rect x="97.5" y="591.5" width="90.0" height="8.0" fill="none" stroke="#fff" stroke-width="1" stroke-dasharray="1.300 1.450" opacity="0.95"/><rect x="190.5" y="591.5" width="35.0" height="8.0" fill="none" stroke="#fff" stroke-width="1" stroke-dasharray="1.300 1.450" opacity="0.95"/><path d="M99.0 595.8h3.600M221.0 595.8h1.800" stroke="#cfcfcf" stroke-width=".8" opacity=".75"/>
<rect x="97.5" y="698.5" width="90.0" height="7.0" fill="none" stroke="#fff" stroke-width="1" stroke-dasharray="1.300 1.450" opacity="0.95"/><rect x="190.5" y="698.5" width="35.0" height="7.0" fill="none" stroke="#fff" stroke-width="1" stroke-dasharray="1.300 1.450" opacity="0.95"/><path d="M99.0 702.1h3.600M221.0 702.1h1.800" stroke="#cfcfcf" stroke-width=".8" opacity=".75"/>
<use href="#pic"/>
</svg>
</body></html>
